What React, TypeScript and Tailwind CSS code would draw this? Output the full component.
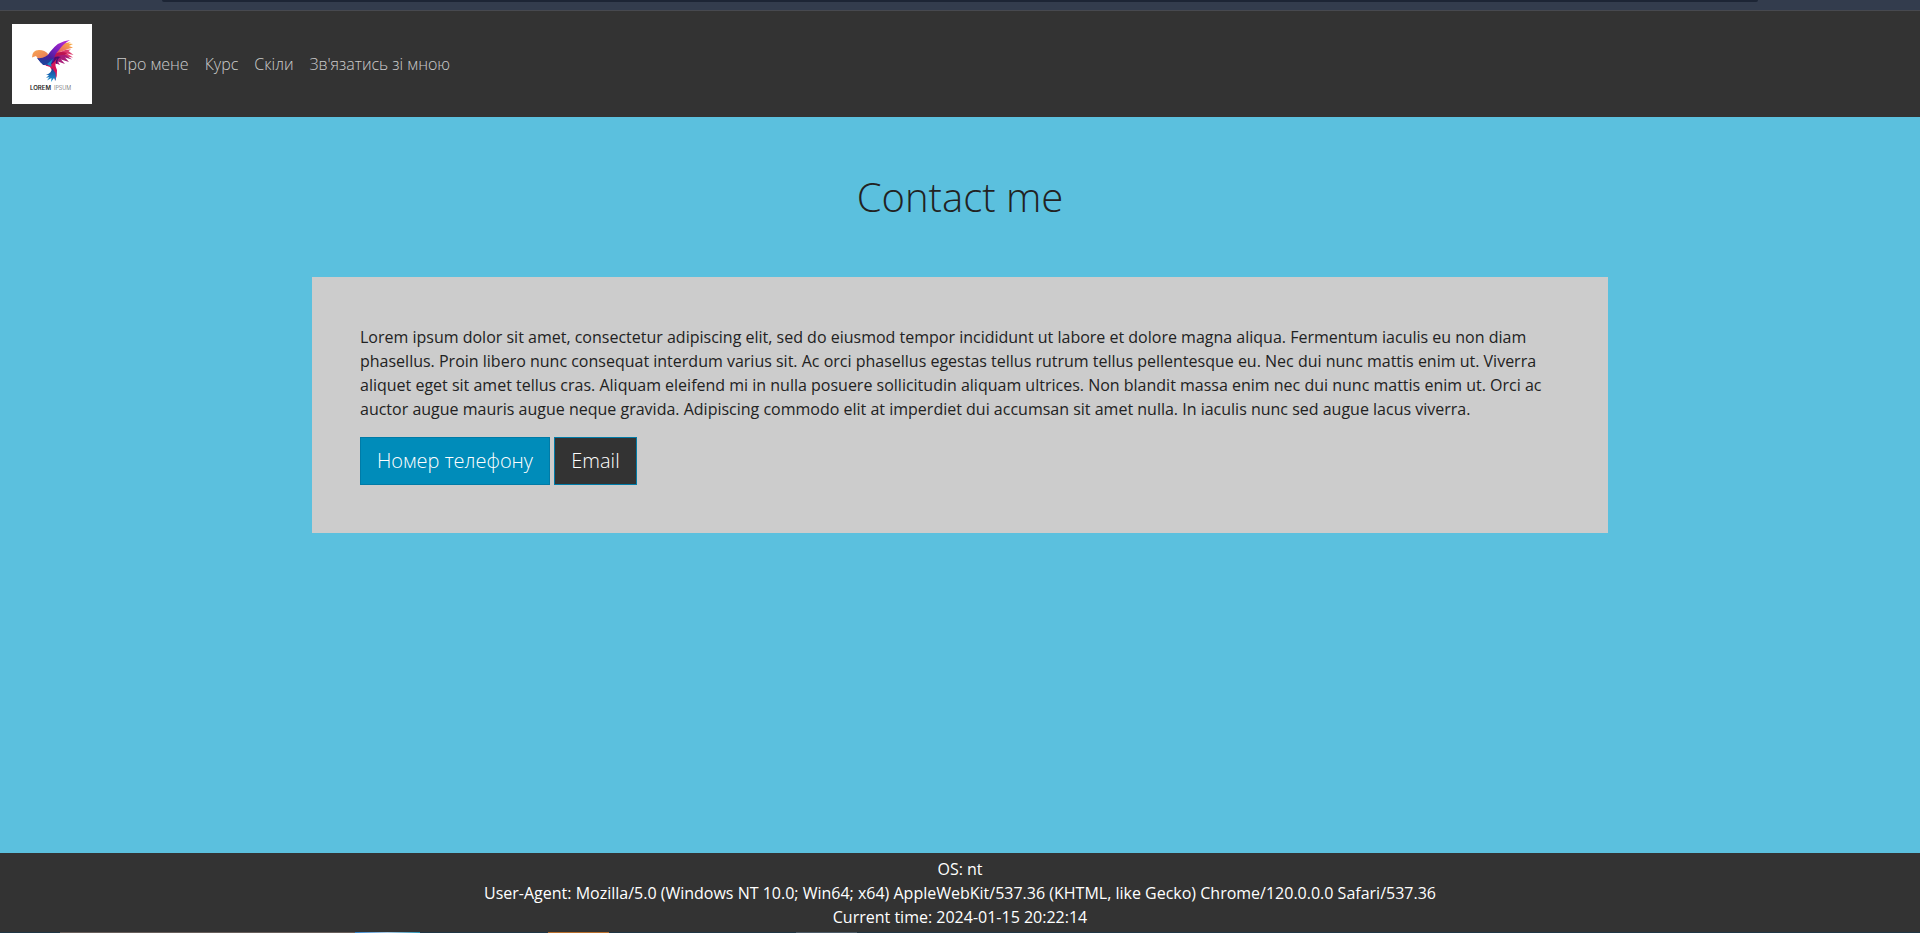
const navItems = ["Про мене", "Курс", "Скіли", "Зв'язатись зі мною"];

function Logo() {
  return (
    <svg viewBox="0 0 80 80" className="block size-20 bg-white">
      <defs>
        <linearGradient id="body" x1="0" y1="0" x2="1" y2="1">
          <stop offset="0" stopColor="#f8a552" />
          <stop offset="1" stopColor="#e8795a" />
        </linearGradient>
        <linearGradient id="wing" x1="1" y1="0" x2="0" y2="1">
          <stop offset="0" stopColor="#c42fd2" />
          <stop offset="0.4" stopColor="#7d1fc0" />
          <stop offset="0.65" stopColor="#4a1f9c" />
          <stop offset="1" stopColor="#1c3f9a" />
        </linearGradient>
        <linearGradient id="feather" x1="1" y1="0" x2="0" y2="1">
          <stop offset="0" stopColor="#fbb83f" />
          <stop offset="0.5" stopColor="#ec7260" />
          <stop offset="1" stopColor="#c01c60" />
        </linearGradient>
        <linearGradient id="tail" x1="0" y1="0" x2="0" y2="1">
          <stop offset="0" stopColor="#1b3c94" />
          <stop offset="1" stopColor="#1a9ad6" />
        </linearGradient>
      </defs>
      <path d="M38 32Q46 19 59 18L56.5 19.5L61 20L57 22L61 23.500L56 25L48 28L41 34Z" fill="url(#feather)" />
      <path d="M40 34Q49 25 59 25.500L56.500 27L61.500 31L55 29.500L61 33.500L50 32L40 39Z" fill="#dc3c70" />
      <path d="M40 32Q47 26 55 29L50 33L40 38Z" fill="#bd1450" />
      <path d="M38 38Q46 29 54 31L60 35.500L53 33.500L57 38L49 35.500L53 40L46 37.500L48 41L43 39L43 42L36 42Z" fill="#a81d78" />
      <path d="M37 37Q43 31 49 33Q45 34 45 40L42 38.500L40 42L34 42Z" fill="#4d0d70" />
      <path d="M20 33.500Q20 26 27 26Q33 26 36 30L35 36L27 36L24 32Z" fill="url(#body)" />
      <path d="M25 34Q34 35 38 28Q46 17 58 16Q51 20 47 26Q42 31 42 36Q37 43 29 39Z" fill="url(#wing)" />
      <path d="M26 35Q34 38 41 34Q38 42 31 41Z" fill="#213f9b" />
      <path d="M32 41Q40 43 45 34Q42 41 45 46Q45.500 52 43 57L42 50L38 43Z" fill="#d51459" />
      <path d="M35 40L41 35Q38 40 40 43L36 41Z" fill="#1687c8" />
      <path d="M40 44L43.500 49L44 57L42 54L39 58L39.500 54L35 56.500L37.500 53L34 54L37 51L34 51Q40 49 40 44Z" fill="url(#tail)" />
      <text x="18" y="65.5" textLength="21" lengthAdjust="spacingAndGlyphs" className="font-['Inter',sans-serif] text-[5.5px] font-semibold" fill="#1d1d22">LOREM</text>
      <text x="42" y="65.5" textLength="17" lengthAdjust="spacingAndGlyphs" className="font-['Inter',sans-serif] text-[5.5px] font-light" fill="#55555a">IPSUM</text>
    </svg>
  );
}

export default function App() {
  return (
    <div className="flex h-[933px] w-full flex-col overflow-hidden bg-[#5bc0de] font-['Open_Sans',sans-serif] text-base leading-6 text-[#222]">
      <div className="h-[11px] shrink-0 border-b border-[#47494f] bg-[#333c4d] px-[162px]">
        <div className="h-0.5 rounded-b-lg bg-[#1d2535]" />
      </div>
      <nav className="flex h-[106px] shrink-0 items-center bg-[#333] px-3">
        <Logo />
        <ul className="ml-4 flex font-light text-white/75">
          {navItems.map((item) => (
            <li key={item}>
              <a href="#" className="block p-2">{item}</a>
            </li>
          ))}
        </ul>
      </nav>
      <main className="flex-1">
        <h1 className="pt-14 text-center text-[40px] leading-[48px] font-light">Contact me</h1>
        <section className="mx-auto mt-14 h-64 w-[1296px] bg-[#ccc] p-12">
          <p className="mb-4">
            Lorem ipsum dolor sit amet, consectetur adipiscing elit, sed do eiusmod tempor incididunt ut labore et dolore magna aliqua. Fermentum iaculis eu non diam phasellus. Proin libero nunc consequat interdum varius sit. Ac orci phasellus egestas tellus rutrum tellus pellentesque eu. Nec dui nunc mattis enim ut. Viverra aliquet eget sit amet tellus cras. Aliquam eleifend mi in nulla posuere sollicitudin aliquam ultrices. Non blandit massa enim nec dui nunc mattis enim ut. Orci ac auctor augue mauris augue neque gravida. Adipiscing commodo elit at imperdiet dui accumsan sit amet nulla. In iaculis nunc sed augue lacus viverra.
          </p>
          <div className="flex gap-1 text-xl leading-[30px] font-light text-white">
            <button className="h-12 w-[190px] border border-[#007ba7] bg-[#008cba]">Номер телефону</button>
            <button className="h-12 w-[83px] border border-[#007ba7] bg-[#333]">Email</button>
          </div>
        </section>
      </main>
      <footer className="h-[79px] shrink-0 bg-[#333] pt-1 text-center text-white">
        <p>OS: nt</p>
        <p>User-Agent: Mozilla/5.0 (Windows NT 10.0; Win64; x64) AppleWebKit/537.36 (KHTML, like Gecko) Chrome/120.0.0.0 Safari/537.36</p>
        <p>Current time: 2024-01-15 20:22:14</p>
      </footer>
      <div className="flex h-px shrink-0 bg-[#203644]">
        <div className="ml-[60px] w-[295px] bg-[#665e5b]" />
        <div className="w-[65px] bg-linear-to-r from-[#2f86cf] via-[#a9cbe6] to-[#1f93b5]" />
        <div className="ml-[128px] w-[61px] bg-[#b96f2c]" />
        <div className="ml-[187px] w-[61px] bg-[#4b5b68]" />
      </div>
    </div>
  );
}
